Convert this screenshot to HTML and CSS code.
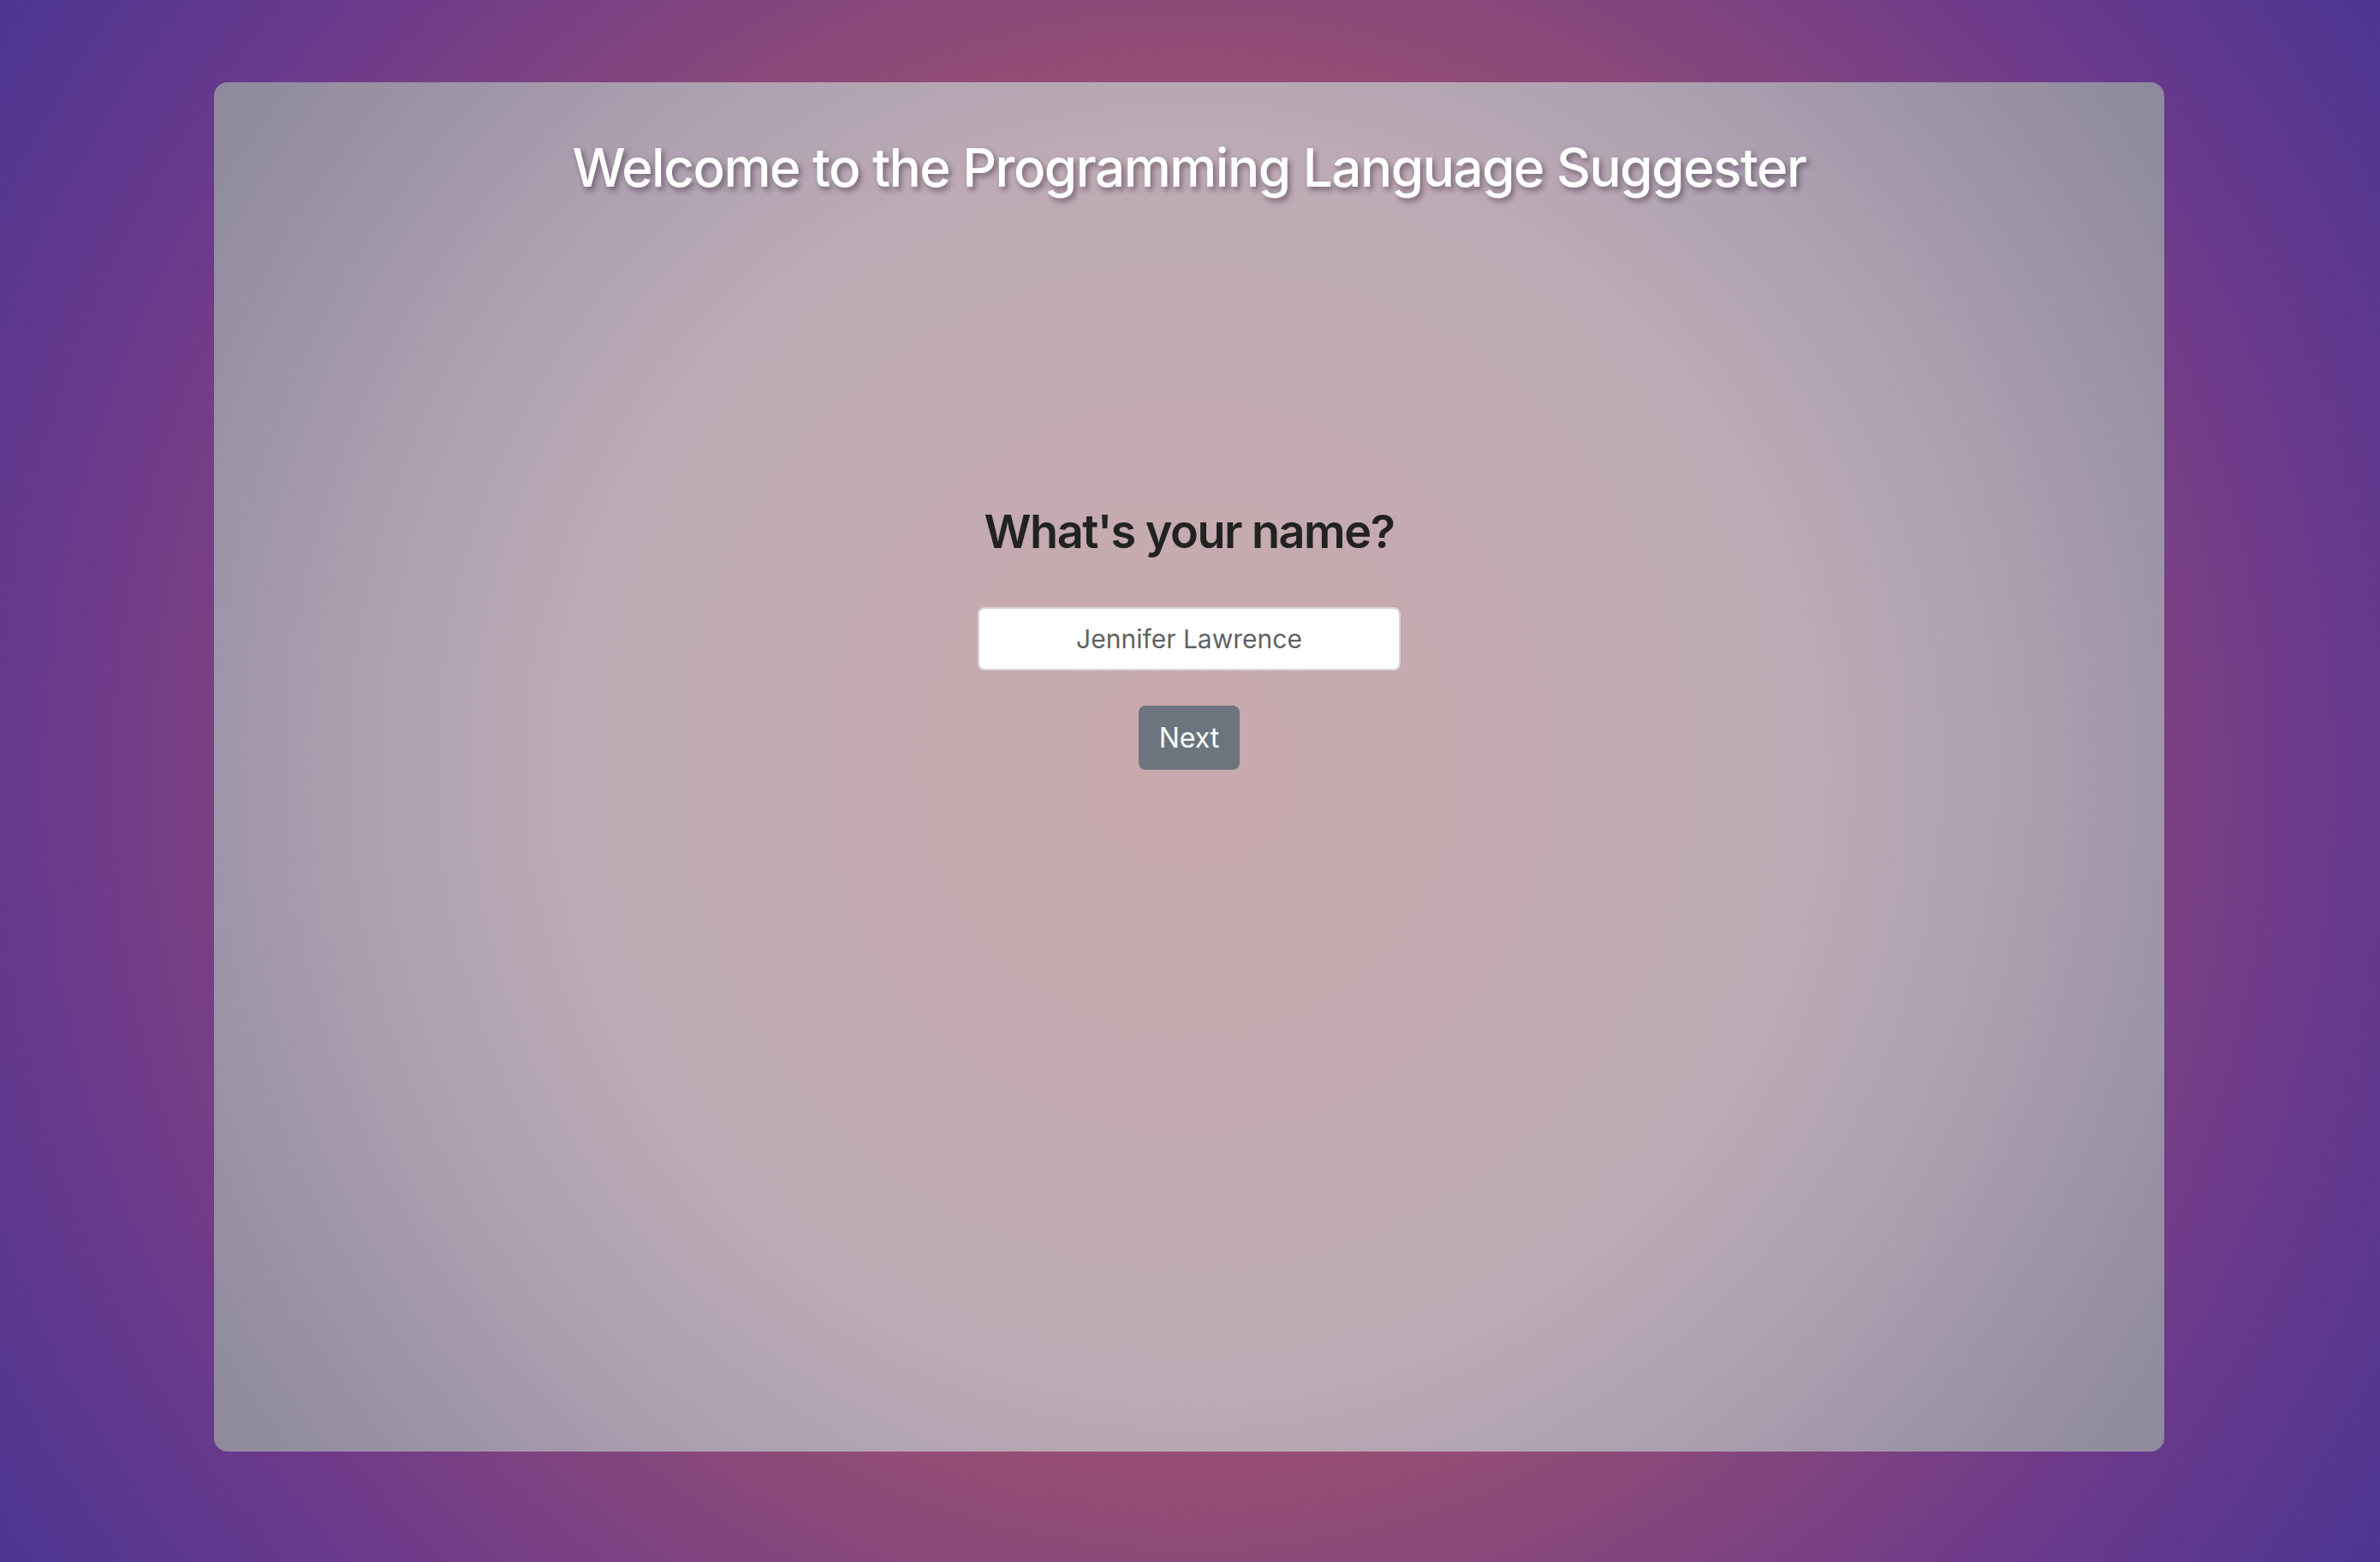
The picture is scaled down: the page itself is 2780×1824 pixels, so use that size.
FILE: index.html
```html
<!DOCTYPE html>
<html lang="en">
<head>
<meta charset="utf-8">
<title>Programming Language Suggester</title>
<link rel="stylesheet" href="styles.css">
</head>
<body>
<div class="page">
  <main class="card">
    <h1 class="title">Welcome to the Programming Language Suggester</h1>
    <section class="question">
      <h3 class="question-label">What's your name?</h3>
      <input class="name-input" type="text" value="Jennifer Lawrence">
      <button class="next-btn" type="button">Next</button>
    </section>
  </main>
</div>
</body>
</html>
```
FILE: styles.css
```css
html, body {
  margin: 0;
  padding: 0;
}
body {
  width: 2780px;
  height: 1824px;
  overflow: hidden;
  font-family: Inter, "Liberation Sans", sans-serif;
  background: radial-gradient(circle farthest-corner at 50% 50%, #d2646a 0%, #b0586c 30%, #8c4a78 55%, #6e3a8a 78%, #4c3592 100%);
}
.page {
  box-sizing: border-box;
  height: 1824px;
  padding: 96px 252px 129px 250px;
  display: flex;
  flex-direction: column;
}
.card {
  flex: 1;
  border-radius: 16px;
  background: radial-gradient(circle farthest-corner at 50% 50%, #c9a9ad 0%, #c3abb1 30%, #bdabb5 52%, #ac9fb0 70%, #9b93a6 85%, #8e899c 100%);
  display: flex;
  flex-direction: column;
  align-items: center;
  padding: 63px 40px 60px;
}
.title {
  margin: 0;
  font-size: 62px;
  font-weight: 500;
  line-height: 1.2;
  color: #ffffff;
  text-shadow: 3px 4px 6px rgba(40, 20, 40, 0.45);
  letter-spacing: -1.5px;
}
.question {
  margin-top: 356px;
  display: flex;
  flex-direction: column;
  align-items: center;
}
.question-label {
  margin: 0 0 55px 0;
  font-size: 54px;
  font-weight: 600;
  line-height: 1.2;
  color: #222222;
  letter-spacing: -1.5px;
}
.name-input {
  box-sizing: border-box;
  width: 494px;
  height: 74px;
  border: 2px solid #d9d4d6;
  border-radius: 8px;
  background: #ffffff;
  text-align: center;
  font-family: Inter, "Liberation Sans", sans-serif;
  font-size: 30px;
  color: #606264;
  outline: none;
  padding: 0 20px;
}
.next-btn {
  margin-top: 41px;
  box-sizing: border-box;
  height: 75px;
  padding: 0 24px;
  border: none;
  border-radius: 8px;
  background: #6c757d;
  color: #ffffff;
  font-family: Inter, "Liberation Sans", sans-serif;
  font-size: 32px;
  font-weight: 400;
}
```
